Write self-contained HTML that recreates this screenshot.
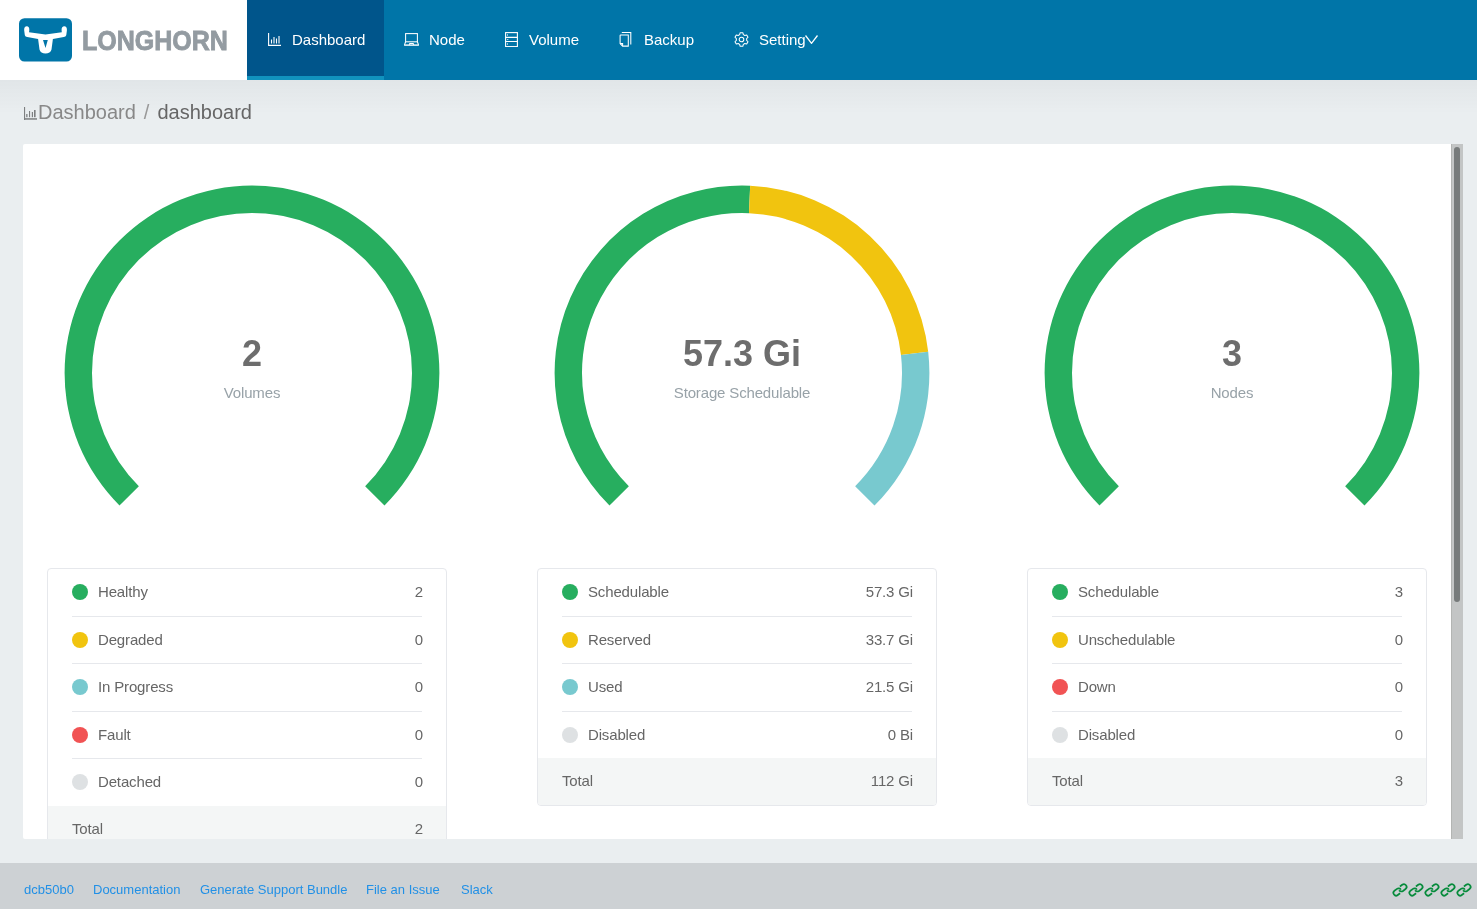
<!DOCTYPE html>
<html><head><meta charset="utf-8">
<style>
*{box-sizing:border-box;margin:0;padding:0}
html,body{width:1477px;height:909px;overflow:hidden;-webkit-font-smoothing:antialiased;background:#eaeef0;font-family:"Liberation Sans",sans-serif;}
body>div{will-change:transform}
.shd{position:absolute;left:0;top:80px;width:1477px;height:34px;background:linear-gradient(rgba(0,20,30,0.035),rgba(0,20,30,0))}
.hdr{position:absolute;left:0;top:0;width:1477px;height:80px;background:#0075a8}
.logo{position:absolute;left:0;top:0;width:247px;height:80px;background:#fff}
.nav{position:absolute;top:0;height:80px;color:#fff;font-size:15px;line-height:80px}
.nav.act{background:#00558b}
.nav.act:after{content:"";position:absolute;left:0;right:0;bottom:0;height:4px;background:#1192be}
.nav svg{position:absolute}
.nav span{position:absolute;white-space:nowrap}
.bc{position:absolute;left:38.3px;top:97px;font-size:20px;line-height:30px;white-space:nowrap}
.clip{position:absolute;left:0;top:0;width:1428px;height:695px;overflow:hidden}
.card{position:absolute;left:23px;top:144px;width:1440px;height:695px;background:#fff;overflow:hidden;border-radius:2px}
.sb{position:absolute;left:1451px;top:144px;width:12px;height:695px;background:#c3c5c5;border-left:1px solid #b3b5b3}
.sbt{position:absolute;left:1454px;top:147px;width:6px;height:455px;background:#777b7b;border-radius:3px}
.gtxt{position:absolute;text-align:center;white-space:nowrap}
.num{font-size:36px;font-weight:bold;color:#6d6d6d;transform:scaleY(1.045);transform-origin:50% 30.5px}
.lbl{font-size:15px;color:#98a2a8;letter-spacing:-0.15px}
.lst{position:absolute;width:400px;letter-spacing:-0.15px;border:1px solid #e6e8ec;border-radius:4px;background:#fff;font-size:15px;color:#666;overflow:hidden}
.it{margin:0 24px;padding:12px 0;line-height:22.5px;border-bottom:1px solid #e6e8ec;display:flex;align-items:center;position:relative}
.it.l{border-bottom:0}
.dot{width:16px;height:16px;border-radius:50%;margin-right:10px;flex:none}
.it .v{margin-left:auto;position:relative;left:1px}
.tot{padding:12px 24px;line-height:22.5px;background:#f4f6f6;display:flex}
.tot .v{margin-left:auto;position:relative;left:1px}
.ftr{position:absolute;left:0;top:863px;width:1477px;height:46px;background:#cdd1d4}
.ftr a{position:absolute;top:0;line-height:54px;font-size:13px;color:#2190e6;text-decoration:none;white-space:nowrap}
</style></head><body>
<div class="hdr"></div>
<div class="logo">
<svg style="position:absolute;left:0;top:0" width="247" height="80" viewBox="0 0 247 80">
<rect x="19" y="18.2" width="53" height="43.4" rx="5.5" fill="#0075a8"/>
<path fill="#fff" fill-rule="evenodd" d="M24.2 30.5 C23.8 27.8 25.2 26.3 26.8 26.3 C28.4 26.3 29.6 27.6 29.3 30.3 L29 32.2 L45.5 34.6 L61.8 32.2 L61.6 30.3 C61.4 27.6 62.6 26.3 64.3 26.3 C65.9 26.3 67.3 27.8 66.9 30.5 L66.3 35 C66 36.4 65 36.8 63.8 37 L52.9 39 L51.5 49.5 C51 52 48.5 53.6 45.5 53.6 C42.5 53.6 40 52 39.5 49.5 L38.1 39 L27.3 37 C26 36.8 25.1 36.4 24.8 35 Z M43 40 L47.8 40 L45.5 48 Z"/>
<text x="81.9" y="49.8" font-family="Liberation Sans" font-weight="bold" font-size="27.8" fill="#939ba1" stroke="#939ba1" stroke-width="0.9" textLength="146" lengthAdjust="spacingAndGlyphs">LONGHORN</text>
</svg>
</div>

<div class="nav act" style="left:247px;width:137px">
<svg style="left:21px;top:33px" width="13" height="13" viewBox="0 0 13 13"><g fill="none" stroke="#fff" stroke-width="1.1"><path d="M0.6 0 V12.4 H13"/><path d="M3.5 6.5V10.5M6 4V10.5M8.5 5.5V10.5M11 3V10.5"/></g></svg>
<span style="left:45px">Dashboard</span>
</div>
<div class="nav" style="left:384px;width:100px">
<svg style="left:16px;top:29px" width="22" height="20" viewBox="0 0 22 20"><g fill="none" stroke="#fff" stroke-width="1.05"><rect x="5.6" y="4.6" width="11.8" height="8.2"/><path d="M5.6 12.8 L4.5 15.9 M17.4 12.8 L18.5 15.9 M9.3 15.8 L9.8 14.5 H13.2 L13.7 15.8"/></g><rect x="4.1" y="15.4" width="14.8" height="1.4" fill="#fff"/></svg>
<span style="left:45px">Node</span>
</div>
<div class="nav" style="left:484px;width:115px">
<svg style="left:21px;top:32px" width="13" height="15" viewBox="0 0 13 15"><g fill="none" stroke="#fff" stroke-width="1.1"><rect x="0.6" y="0.6" width="11.8" height="14"/><path d="M0.6 5.4H12.4M0.6 9.5H12.4"/></g><g fill="#fff" opacity="0.8"><rect x="2.1" y="2.2" width="0.9" height="1.6"/><rect x="2.1" y="7" width="1.2" height="1"/><rect x="2.1" y="11.2" width="0.9" height="1.6"/></g></svg>
<span style="left:45px">Volume</span>
</div>
<div class="nav" style="left:599px;width:115px">
<svg style="left:20px;top:32px" width="14" height="16" viewBox="0 0 14 16"><g fill="none" stroke="#fff" stroke-width="1.05"><path d="M1.8 2.9 H9.3 V14.1 H3.6 L1.1 11.6 V3.6 Q1.1 2.9 1.8 2.9Z"/><path d="M1.1 11.6 H3.6 V14.1"/><path d="M2.8 0.5 H11.8 V12.6"/></g></svg>
<span style="left:45px">Backup</span>
</div>
<div class="nav" style="left:714px;width:120px">
<svg style="left:20px;top:32px" width="15" height="15" viewBox="0 0 15 15"><g fill="none" stroke="#fff" stroke-width="1.05" stroke-linejoin="round"><path d="M9.36 2.65 L8.82 0.73 L6.18 0.73 L5.64 2.65 L4.23 3.46 L2.29 2.97 L0.98 5.25 L2.36 6.69 L2.36 8.31 L0.98 9.75 L2.29 12.03 L4.23 11.54 L5.64 12.35 L6.18 14.27 L8.82 14.27 L9.36 12.35 L10.77 11.54 L12.71 12.03 L14.02 9.75 L12.64 8.31 L12.64 6.69 L14.02 5.25 L12.71 2.97 L10.77 3.46Z"/><circle cx="7.5" cy="7.5" r="2.3"/></g></svg>
<span style="left:45px">Setting</span>
<svg style="left:91px;top:35px" width="13" height="9" viewBox="0 0 13 9"><path d="M0.5 0.5L6.5 8.3L12.5 0.5" fill="none" stroke="#fff" stroke-width="1.3"/></svg>
</div>

<div class="shd"></div>
<svg style="position:absolute;left:23px;top:106px" width="15" height="15" viewBox="0 0 15 15"><g fill="#7d7f80"><rect x="1" y="1" width="1.1" height="13"/><rect x="1" y="12.2" width="13" height="1.5"/><rect x="3.2" y="8" width="1.3" height="3.2"/><rect x="6" y="5" width="1.1" height="6.2"/><rect x="8.8" y="6" width="1.2" height="5.2"/><rect x="11" y="4" width="1.6" height="7.2"/></g></svg>
<div class="bc"><span style="color:#888">Dashboard</span><span style="color:#999;margin:0 8px">/</span><span style="color:#666">dashboard</span></div>

<div class="card"><div class="clip"><svg style="position:absolute;left:-23px;top:-144px" width="1477" height="909"><path fill="#27ae5f" d="M119.49 505.51A187.4 187.4 0 1 1 384.51 505.51L365.14 486.14A160 160 0 1 0 138.86 486.14Z"/><path fill="#27ae5f" d="M609.49 505.51A187.4 187.4 0 0 1 750.17 185.78L748.98 213.15A160 160 0 0 0 628.86 486.14Z"/><path fill="#f1c40f" d="M750.17 185.78A187.4 187.4 0 0 1 928.20 351.79L900.97 354.89A160 160 0 0 0 748.98 213.15Z"/><path fill="#78c9cf" d="M928.20 351.79A187.4 187.4 0 0 1 874.51 505.51L855.14 486.14A160 160 0 0 0 900.97 354.89Z"/><path fill="#27ae5f" d="M1099.49 505.51A187.4 187.4 0 1 1 1364.51 505.51L1345.14 486.14A160 160 0 1 0 1118.86 486.14Z"/></svg><div class="gtxt num" style="left:29px;top:192px;width:400px;line-height:36px">2</div><div class="gtxt lbl" style="left:29px;top:241px;width:400px;line-height:15px">Volumes</div><div class="gtxt num" style="left:519px;top:192px;width:400px;line-height:36px">57.3 Gi</div><div class="gtxt lbl" style="left:519px;top:241px;width:400px;line-height:15px">Storage Schedulable</div><div class="gtxt num" style="left:1009px;top:192px;width:400px;line-height:36px">3</div><div class="gtxt lbl" style="left:1009px;top:241px;width:400px;line-height:15px">Nodes</div><div class="lst" style="left:24px;top:424px"><div class="it"><i class="dot" style="background:#27ae5f"></i><span>Healthy</span><span class="v">2</span></div><div class="it"><i class="dot" style="background:#f1c40f"></i><span>Degraded</span><span class="v">0</span></div><div class="it"><i class="dot" style="background:#78c9cf"></i><span>In Progress</span><span class="v">0</span></div><div class="it"><i class="dot" style="background:#f15354"></i><span>Fault</span><span class="v">0</span></div><div class="it l"><i class="dot" style="background:#dee1e3"></i><span>Detached</span><span class="v">0</span></div><div class="tot"><span>Total</span><span class="v">2</span></div></div><div class="lst" style="left:514px;top:424px"><div class="it"><i class="dot" style="background:#27ae5f"></i><span>Schedulable</span><span class="v">57.3 Gi</span></div><div class="it"><i class="dot" style="background:#f1c40f"></i><span>Reserved</span><span class="v">33.7 Gi</span></div><div class="it"><i class="dot" style="background:#78c9cf"></i><span>Used</span><span class="v">21.5 Gi</span></div><div class="it l"><i class="dot" style="background:#dee1e3"></i><span>Disabled</span><span class="v">0 Bi</span></div><div class="tot"><span>Total</span><span class="v">112 Gi</span></div></div><div class="lst" style="left:1004px;top:424px"><div class="it"><i class="dot" style="background:#27ae5f"></i><span>Schedulable</span><span class="v">3</span></div><div class="it"><i class="dot" style="background:#f1c40f"></i><span>Unschedulable</span><span class="v">0</span></div><div class="it"><i class="dot" style="background:#f15354"></i><span>Down</span><span class="v">0</span></div><div class="it l"><i class="dot" style="background:#dee1e3"></i><span>Disabled</span><span class="v">0</span></div><div class="tot"><span>Total</span><span class="v">3</span></div></div></div></div>
<div class="sb"></div><div class="sbt"></div>

<div class="ftr">
<a style="left:24px">dcb50b0</a>
<a style="left:93px">Documentation</a>
<a style="left:200px">Generate Support Bundle</a>
<a style="left:366px">File an Issue</a>
<a style="left:461px">Slack</a>
</div>
<svg style="position:absolute;left:0;top:0;overflow:visible" width="1477" height="909"><g fill="none" stroke="#068b3b" stroke-width="1.7"><g transform="translate(1400 889.9) rotate(-38)"><path d="M-2.0 2.7 H-4.9 A2.7 2.7 0 0 1 -4.9 -2.7 H-1.7 A2.7 2.7 0 0 1 0.9 0.3"/><path d="M2.0 -2.7 H4.9 A2.7 2.7 0 0 1 4.9 2.7 H1.7 A2.7 2.7 0 0 1 -0.9 -0.3"/></g><g transform="translate(1416 889.9) rotate(-38)"><path d="M-2.0 2.7 H-4.9 A2.7 2.7 0 0 1 -4.9 -2.7 H-1.7 A2.7 2.7 0 0 1 0.9 0.3"/><path d="M2.0 -2.7 H4.9 A2.7 2.7 0 0 1 4.9 2.7 H1.7 A2.7 2.7 0 0 1 -0.9 -0.3"/></g><g transform="translate(1432 889.9) rotate(-38)"><path d="M-2.0 2.7 H-4.9 A2.7 2.7 0 0 1 -4.9 -2.7 H-1.7 A2.7 2.7 0 0 1 0.9 0.3"/><path d="M2.0 -2.7 H4.9 A2.7 2.7 0 0 1 4.9 2.7 H1.7 A2.7 2.7 0 0 1 -0.9 -0.3"/></g><g transform="translate(1448 889.9) rotate(-38)"><path d="M-2.0 2.7 H-4.9 A2.7 2.7 0 0 1 -4.9 -2.7 H-1.7 A2.7 2.7 0 0 1 0.9 0.3"/><path d="M2.0 -2.7 H4.9 A2.7 2.7 0 0 1 4.9 2.7 H1.7 A2.7 2.7 0 0 1 -0.9 -0.3"/></g><g transform="translate(1464 889.9) rotate(-38)"><path d="M-2.0 2.7 H-4.9 A2.7 2.7 0 0 1 -4.9 -2.7 H-1.7 A2.7 2.7 0 0 1 0.9 0.3"/><path d="M2.0 -2.7 H4.9 A2.7 2.7 0 0 1 4.9 2.7 H1.7 A2.7 2.7 0 0 1 -0.9 -0.3"/></g></g></svg>
</body></html>
